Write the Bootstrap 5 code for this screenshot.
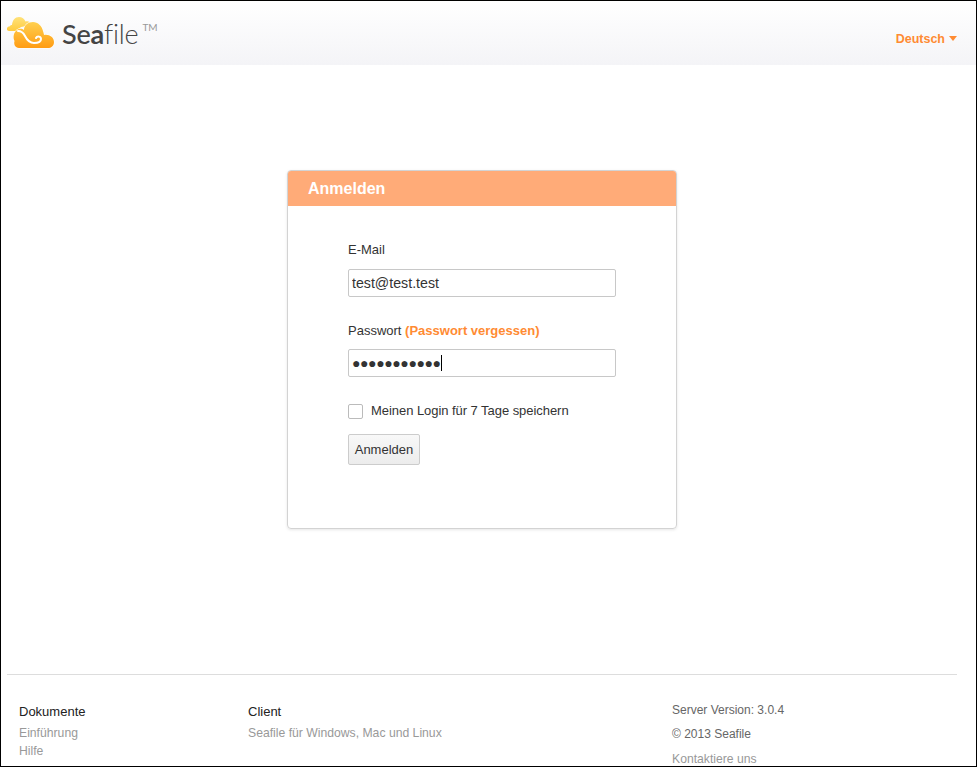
<!DOCTYPE html>
<html lang="de">
<head>
    <meta charset="UTF-8">
    <meta name="viewport" content="width=device-width, initial-scale=1.0">
    <title>Seafile | Anmelden</title>
    <link rel="stylesheet" href="https://cdn.jsdelivr.net/npm/bootstrap@5.3.0/dist/css/bootstrap.min.css">
    <style>
        html, body {
            height: 767px;
            overflow: hidden;
        }
        body {
            border: 1px solid #000;
            background: #fff;
            color: #333;
            font-family: "Liberation Sans", Arial, sans-serif;
            font-size: 13px;
        }
        .top-bar {
            height: 64px;
            padding: 16px 19px 0 6px;
            background: linear-gradient(#fff, #f4f4f7);
        }
        .brand-name {
            font-family: Lato, sans-serif;
            font-size: 27px;
            font-weight: 300;
            line-height: 33px;
            color: #444;
            margin-left: 7px;
            letter-spacing: -.2px;
        }
        .brand-name em {
            font-style: normal;
            font-weight: 500;
        }
        .brand-name b {
            font-weight: 700;
        }
        .brand-name sup {
            font-size: 10px;
            font-weight: 400;
            color: #999;
            top: -13px;
            vertical-align: baseline;
            position: relative;
            margin-left: 4px;
        }
        .lang-pick {
            color: #ff8b33;
            font-size: 12.5px;
            font-weight: 700;
            line-height: 15px;
            margin-top: 15px;
            text-decoration: none;
        }
        .lang-caret {
            display: inline-block;
            border: 4px solid transparent;
            border-top: 5px solid #ff8b33;
            border-bottom: 0;
            margin-left: 4px;
            vertical-align: 2px;
        }
        .page-wrap {
            width: 950px;
            margin-left: 6px;
        }
        .login-box {
            width: 390px;
            height: 359px;
            margin: 105px auto 0;
            border: 1px solid #d3d3d3;
            border-radius: 4px;
            box-shadow: 0 1px 3px rgba(0, 0, 0, .1);
        }
        .login-head {
            height: 35px;
            background: #ffab78;
            color: #fff;
            font-size: 16px;
            font-weight: 700;
            line-height: 35px;
            padding-left: 20px;
            border-radius: 3px 3px 0 0;
        }
        .login-form {
            padding: 36px 0 0 60px;
        }
        .field-label {
            display: block;
            line-height: 16px;
            margin-bottom: 11px;
        }
        .field-label a {
            color: #ff8b33;
            font-weight: 700;
            text-decoration: none;
        }
        .field-input {
            display: block;
            width: 268px;
            height: 28px;
            padding: 0 3px;
            border: 1px solid #c8c8c8;
            border-radius: 2px;
            color: #333;
            font-size: 14.2px;
            line-height: 26px;
            margin-bottom: 26px;
            outline: 0;
        }
        .field-input + .field-label {
            margin-bottom: 10px;
        }
        .dots {
            font-size: 14px;
            letter-spacing: -.4px;
        }
        .text-cursor {
            display: inline-block;
            width: 1px;
            height: 16px;
            background: #000;
            vertical-align: -3px;
        }
        .remember-box {
            width: 15px;
            height: 15px;
            border: 1px solid #bbb;
            border-radius: 2px;
            margin-right: 8px;
        }
        .remember-row {
            line-height: 16px;
            margin-top: 2px;
            margin-bottom: 15px;
            letter-spacing: -.05px;
        }
        .login-btn {
            display: block;
            width: 72px;
            height: 31px;
            padding: 0;
            border: 1px solid #ccc;
            border-radius: 2px;
            background: linear-gradient(#f8f8f8, #ececec);
            color: #333;
            font-size: 13px;
        }
        .foot-line {
            height: 1px;
            background: #ddd;
            margin-top: 145px;
        }
        .foot-cols {
            padding: 29px 0 0 12px;
            line-height: 14px;
            font-size: 12.2px;
        }
        .foot-a { width: 229px; }
        .foot-b { width: 424px; }
        .foot-title {
            color: #222;
            font-size: 13px;
            margin-top: 1px;
            margin-bottom: 7px;
        }
        .foot-link {
            display: block;
            color: #999;
            text-decoration: none;
            margin-bottom: 4px;
        }
        .foot-info {
            color: #666;
            font-size: 12px;
            margin-top: -1px;
            margin-bottom: 11px;
        }
        .foot-info + .foot-link {
            margin-top: 7px;
        }
    </style>
</head>
<body>
    <!-- Header -->
    <header class="top-bar d-flex justify-content-between align-items-start">
        <a class="d-flex align-items-start text-decoration-none" href="#">
            <svg width="48" height="32" viewBox="0 0 48 32">
                <defs>
                    <linearGradient id="cloudBack" x1="0" y1="0" x2="0" y2="1">
                        <stop offset="0" stop-color="#ffe27a"/>
                        <stop offset="1" stop-color="#ffcb3d"/>
                    </linearGradient>
                    <linearGradient id="cloudFront" x1="0" y1="0" x2="0" y2="1">
                        <stop offset="0" stop-color="#ffd04f"/>
                        <stop offset="1" stop-color="#ff9c14"/>
                    </linearGradient>
                </defs>
                <path fill="url(#cloudBack)" d="M2 14C-1 14-1 9.500 2.500 9.500 3 8.500 4 8 5 8 5.500 3 8 0 12 0c3 0 5.500 2 6.500 4.500 2.500-1 5.500.5 6 3.500L14 10l-5 4z"/>
                <path fill="url(#cloudFront)" stroke="#fff" stroke-width="1.200" paint-order="stroke" d="M12 31c-4 0-5.500-4-4.500-7-1.500-3-1.500-8 2.500-11 3-2 5.500-1 7 0 0-5 4-8 9-8s9 4 10 9c1 3 1 4 1 4 5-1 10 2 10 7 0 4-3 6-6 6z"/>
                <path fill="none" stroke="#fff" stroke-width="2" stroke-linecap="round" d="M11 14c4 0 6 3 7 5 2 4 4 7 9 7 4 0 7-1 7-4 0-3-4-3-5-1"/>
            </svg>
            <span class="brand-name"><em>Se</em><b>a</b>file<sup>TM</sup></span>
        </a>
        <a class="lang-pick" href="#">Deutsch<span class="lang-caret"></span></a>
    </header>

    <div class="page-wrap">
        <!-- Login -->
        <div class="login-box">
            <div class="login-head">Anmelden</div>
            <form class="login-form">
                <label class="field-label">E-Mail</label>
                <input class="field-input" type="text" value="test@test.test">
                <label class="field-label">Passwort <a href="#">(Passwort vergessen)</a></label>
                <div class="field-input dots">&#9679;&#9679;&#9679;&#9679;&#9679;&#9679;&#9679;&#9679;&#9679;&#9679;&#9679;<span class="text-cursor"></span></div>
                <div class="remember-row d-flex align-items-center">
                    <span class="remember-box"></span>Meinen Login für 7 Tage speichern
                </div>
                <button class="login-btn" type="button">Anmelden</button>
            </form>
        </div>

        <!-- Footer -->
        <div class="foot-line"></div>
        <footer class="foot-cols d-flex">
            <div class="foot-a">
                <div class="foot-title">Dokumente</div>
                <a class="foot-link" href="#">Einführung</a>
                <a class="foot-link" href="#">Hilfe</a>
            </div>
            <div class="foot-b">
                <div class="foot-title">Client</div>
                <a class="foot-link" href="#">Seafile für Windows, Mac und Linux</a>
            </div>
            <div>
                <div class="foot-info">Server Version: 3.0.4</div>
                <div class="foot-info">© 2013 Seafile</div>
                <a class="foot-link" href="#">Kontaktiere uns</a>
            </div>
        </footer>
    </div>

    <script src="https://cdn.jsdelivr.net/npm/bootstrap@5.3.0/dist/js/bootstrap.bundle.min.js"></script>
</body>
</html>
